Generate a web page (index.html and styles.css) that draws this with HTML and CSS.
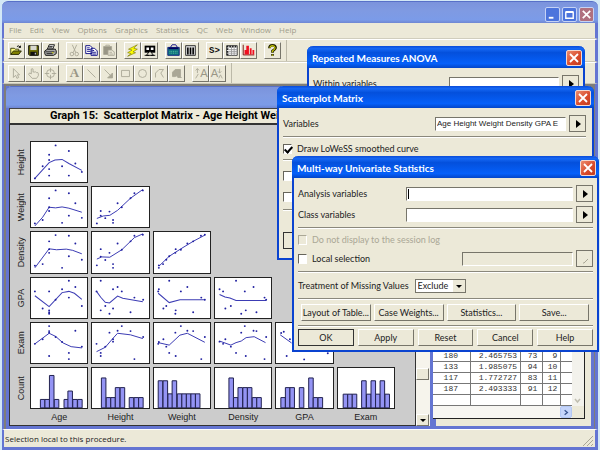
FILE: index.html
```html
<!DOCTYPE html>
<html lang="en">
<head>
<meta charset="utf-8">
<title>Scatterplot Matrix</title>
<link rel="stylesheet" href="styles.css">
</head>
<body>
<div class="app">
  <header class="app-title">
    <button class="cap min" aria-label="Minimize"><svg viewBox="0 0 14 14"><path d="M3 10.5h5" stroke-width="2"/></svg></button>
    <button class="cap" aria-label="Maximize"><svg viewBox="0 0 14 14"><path d="M3 4.500h8v6.500H3zM3 4h8"/></svg></button>
    <button class="cap dim-close" aria-label="Close"><svg viewBox="0 0 14 14"><path d="M3 3l8 8M11 3l-8 8" stroke-width="1.800"/></svg></button>
  </header>
  <nav class="menu">
    <a href="#">File</a><a href="#">Edit</a><a href="#">View</a><a href="#">Options</a><a href="#">Graphics</a><a href="#">Statistics</a><a href="#">QC</a><a href="#">Web</a><a href="#">Window</a><a href="#">Help</a>
  </nav>
  <div class="toolbar">
    <div class="group">
      <button aria-label="Open"><svg viewBox="0 0 17 17"><path d="M2 13V6h4l1 1h4v2" fill="#ffff80" stroke="#333300"/><path d="M2 13l3-4h9l-3 4z" fill="#808000" stroke="#222200"/><path d="M9 4q2-2 4 1M13 3v2h-2" fill="none" stroke="#000"/></svg></button>
      <button aria-label="Save"><svg viewBox="0 0 17 17"><path d="M3 3h11v11H4l-1-1z" fill="#6b6b00" stroke="#000"/><path d="M5 3h7v5H5z" fill="#d8d8d0"/><path d="M5 10h7v4H5z" fill="#111"/><path d="M10 11h1v2h-1z" fill="#fff"/></svg></button>
      <button aria-label="Print"><svg viewBox="0 0 17 17"><path d="M5 7l2-5h6l-2 5z" fill="#fff" stroke="#000"/><path d="M2 9l3-2h9l1 2v3l-3 2H3l-1-2z" fill="#aaa" stroke="#000"/><path d="M3 10h10M4 12h7M7 4h4M6.500 5.500h4" stroke="#222"/><path d="M10 11h2" stroke="#dddd00"/></svg></button>
    </div>
    <div class="group">
      <button class="off" aria-label="Cut"><svg viewBox="0 0 17 17"><path d="M6 2l4 9M11 2L7 11"/><circle cx="5.500" cy="12.500" r="2"/><circle cx="11" cy="12.500" r="2"/></svg></button>
      <button aria-label="Copy"><svg viewBox="0 0 17 17"><path d="M2 3h5l2 2v7H2zM8 6h4l3 3v5H8z" fill="#fff" stroke="#000080"/><path d="M3.500 5.500h3M3.500 7.500h4M3.500 9.500h4M9.500 8.500h2M9.500 10.500h4M9.500 12.500h4" stroke="#000080"/></svg></button>
      <button class="off" aria-label="Paste"><svg viewBox="0 0 17 17"><path d="M3 4h9v9H3z" fill="#999686"/><path d="M5.500 4V2.500h4V4z" fill="#ece9d8"/><path d="M8 8h4l3 2v4H8z" fill="#ece9d8"/><path d="M9.500 10.500h3M9.500 12.500h4"/></svg></button>
    </div>
    <div class="group">
      <button aria-label="Run"><svg viewBox="0 0 17 17"><path d="M14 2L4 7l4 1-5 3 4 1-4 3 9-4-3-1 5-3-4-1z" fill="#ffff00" stroke="#777700" stroke-width=".7"/></svg></button>
      <button aria-label="View data"><svg viewBox="0 0 17 17"><path d="M3 3h12v8H3z" fill="#000"/><path d="M5 5h3v3H5zM10 5h3v3h-3z" fill="#fff"/><path d="M5 14l3-4h2l3 4z" fill="#ece9d8" stroke="#000"/><path d="M3 14h5M10 14h5" stroke="#000"/></svg></button>
    </div>
    <div class="group">
      <button aria-label="Calculator"><svg viewBox="0 0 17 17"><path d="M5 5l2-3h4l2 3" fill="none" stroke="#000080"/><path d="M2 5h13v9H2z" fill="#107080" stroke="#102080"/><path d="M3 6h11" stroke="#000060" stroke-width="2"/><path d="M4 9.500h9M4 11.500h9" stroke="#60d0a0" stroke-dasharray="1 1"/></svg></button>
      <button aria-label="Columns"><svg viewBox="0 0 17 17"><path d="M3 3h11v11H3z" fill="#ddd" stroke="#222"/><path d="M5.500 5v8M8.500 5v8M11.500 5v8" stroke="#000" stroke-width="1.800"/></svg></button>
    </div>
    <div class="group">
      <button class="session" aria-label="Session">S&gt;</button>
      <button aria-label="Datasheet"><svg viewBox="0 0 17 17"><path d="M3 3h12v11H3z" fill="#fff" stroke="#333"/><path d="M3 4h12M4 3v11" stroke="#222" stroke-width="2" stroke-dasharray="2 1"/><path d="M5 7.500h10M5 9.500h10M5 11.500h10M8.500 4v10M11.500 4v10" stroke="#999"/></svg></button>
      <button aria-label="Graph"><svg viewBox="0 0 17 17"><path d="M2.500 2v11.500H15" fill="none" stroke="#700000"/><path d="M4 8h2v5H4zM6 3h3v10H6zM10 6h2v7h-2zM13 8h2v5h-2z" fill="#f01020"/></svg></button>
    </div>
    <div class="group last">
      <button aria-label="Help"><svg viewBox="0 0 17 17"><path d="M5 6q0-3.500 3.500-3.500T12 5.500Q12 7 8.500 9v2M8.500 12.500v2" fill="none" stroke="#222200" stroke-width="3"/><path d="M5.500 5.500q.5-2.500 3-2.500t3 2.500Q11.500 7 8.500 9v1.500M8.500 13v1.500" fill="none" stroke="#c8c800" stroke-width="1.300"/></svg></button>
    </div>
  </div>
  <div class="toolbar tools">
    <div class="group">
      <button class="off" aria-label="Select"><svg viewBox="0 0 17 17"><path d="M5 3v10l2.500-2.500L9 14l2-1-1.500-3H12z"/></svg></button>
      <button class="off" aria-label="Hand"><svg viewBox="0 0 17 17"><path d="M6 9V3.500q1-1 2 0V7q1-1 2 0 1-1 2 .5 2-.5 2 1V11l-2 3H7L3 9.500Q3 8 4.500 8z"/></svg></button>
      <button class="off" aria-label="Target"><svg viewBox="0 0 17 17"><circle cx="8.500" cy="8.500" r="4.500"/><path d="M8.500 2v5M8.500 10v5M2 8.500h5M10 8.500h5"/></svg></button>
    </div>
    <div class="group">
      <button class="off letter" aria-label="Text">A</button>
      <button class="off" aria-label="Line"><svg viewBox="0 0 17 17"><path d="M4 4l9 9"/></svg></button>
      <button class="off" aria-label="Arrow"><svg viewBox="0 0 17 17"><path d="M4 4l7 7"/><path d="M13 8v5.500H7.500z" fill="#aaa796"/></svg></button>
      <button class="off" aria-label="Rectangle"><svg viewBox="0 0 17 17"><path d="M4 5h9v7H4z"/></svg></button>
      <button class="off" aria-label="Ellipse"><svg viewBox="0 0 17 17"><circle cx="8.500" cy="8.500" r="4.500"/></svg></button>
      <button class="off" aria-label="Polygon"><svg viewBox="0 0 17 17"><path d="M4 13V8l4-4h5l-3 4 3 5"/></svg></button>
      <button class="off" aria-label="Filled polygon"><svg viewBox="0 0 17 17"><path d="M4 12V7l3-3h6v8l1 1h-4l-1-2-2 1z" fill="#aaa796"/></svg></button>
    </div>
    <div class="group last">
      <button class="off scale" aria-label="Larger text"><svg viewBox="0 0 17 17"><path d="M5 3v5M3 5l2-2 2 2M3 14l3-5"/></svg>A</button>
      <button class="off scale down" aria-label="Smaller text">A<svg viewBox="0 0 17 17"><path d="M12 3v5M10 6l2 2 2-2M11 14l2-4 2 4"/></svg></button>
    </div>
  </div>
  <main class="workspace">
    <section class="window data">
      <div class="window-title"></div>
      <div class="data-body">
        <table>
          <tr><td>180</td><td>2.465753</td><td>73</td><td>9</td><td></td></tr>
          <tr><td>133</td><td>1.985075</td><td>94</td><td>10</td><td></td></tr>
          <tr><td>117</td><td>1.772727</td><td>83</td><td>11</td><td></td></tr>
          <tr><td>187</td><td>2.493333</td><td>91</td><td>12</td><td></td></tr>
          <tr><td></td><td></td><td></td><td></td><td></td></tr>
        </table>
        <div class="vbar"><svg viewBox="0 0 11 11"><path d="M3 4l2.500 3L8 4"/></svg></div>
        <div class="hbar"><button aria-label="Scroll right"><svg viewBox="0 0 11 11"><path d="M4 3l3 2.500L4 8"/></svg></button></div>
        <div class="corner"></div>
      </div>
    </section>
    <section class="window graph">
      <div class="window-title"></div>
      <h1>Graph 15:&nbsp; Scatterplot Matrix - Age Height Wei</h1>
      <div class="graph-body">
        <div class="canvas"><div class="matrix" id="matrix"></div></div>
        <div class="scroll"><span class="thumb"></span><button aria-label="Scroll down"><svg viewBox="0 0 12 12"><path d="M3 5h6L6 8z"/></svg></button></div>
      </div>
    </section>
  </main>
  <footer class="status"><span>Selection local to this procedure.</span>
    <svg viewBox="0 0 12 12"><path d="M1 11L11 1M5 11l6-6M9 11l2-2"/></svg></footer>
</div>

<section class="dialog anova">
  <header><h2>Repeated Measures ANOVA</h2><button class="close" aria-label="Close"><svg viewBox="0 0 14 14"><path d="M3 3l8 8M11 3l-8 8"/></svg></button></header>
  <div class="content">
    <div class="row"><label for="within">Within variables</label><input id="within" type="text"><button class="pick" aria-label="Pick"><svg viewBox="0 0 14 14"><path d="M5 3v8l5-4z"/></svg></button></div>
  </div>
</section>

<section class="dialog splom">
  <header><h2>Scatterplot Matrix</h2><button class="close" aria-label="Close"><svg viewBox="0 0 14 14"><path d="M3 3l8 8M11 3l-8 8"/></svg></button></header>
  <div class="content">
    <div class="row"><label for="vars">Variables</label><input id="vars" type="text" value="Age Height Weight Density GPA E"><button class="pick" aria-label="Pick"><svg viewBox="0 0 14 14"><path d="M5 3v8l5-4z"/></svg></button></div>
    <hr>
    <label class="check"><input type="checkbox" checked>Draw LoWeSS smoothed curve</label>
    <hr>
    <div class="check"><input type="checkbox" aria-label="Option"></div>
    <div class="check"><input type="checkbox" aria-label="Option"></div>
    <hr class="apart">
    <button class="push ok" aria-label="OK"></button>
  </div>
</section>

<section class="dialog stats">
  <header><h2>Multi-way Univariate Statistics</h2><button class="close" aria-label="Close"><svg viewBox="0 0 14 14"><path d="M3 3l8 8M11 3l-8 8"/></svg></button></header>
  <div class="content">
    <div class="row"><label for="analysis">Analysis variables</label><span class="field caret"><input id="analysis" type="text"></span><button class="pick" aria-label="Pick"><svg viewBox="0 0 14 14"><path d="M5 3v8l5-4z"/></svg></button></div>
    <div class="row"><label for="class">Class variables</label><span class="field"><input id="class" type="text"></span><button class="pick" aria-label="Pick"><svg viewBox="0 0 14 14"><path d="M5 3v8l5-4z"/></svg></button></div>
    <hr>
    <label class="check disabled"><input type="checkbox" disabled>Do not display to the session log</label>
    <div class="row local"><label class="check"><input type="checkbox">Local selection</label><input type="text" aria-label="Selection" disabled><button class="pick faint" aria-label="Pick"><svg viewBox="0 0 14 14"><path d="M5 11h1l4-4"/></svg></button></div>
    <hr>
    <div class="row missing"><label for="missing">Treatment of Missing Values</label>
      <span class="select"><select id="missing"><option>Exclude</option></select><svg viewBox="0 0 12 12"><path d="M3 5h6L6 8z"/></svg></span></div>
    <hr>
    <div class="buttons options"><button class="push">Layout of Table...</button><button class="push">Case Weights...</button><button class="push">Statistics...</button><button class="push">Save...</button></div>
    <div class="actions">
      <hr>
      <div class="buttons"><button class="push ok">OK</button><button class="push">Apply</button><button class="push">Reset</button><button class="push">Cancel</button><button class="push">Help</button></div>
    </div>
  </div>
</section>
<script src="plots.js"></script>
</body>
</html>
```
FILE: styles.css
```css
* { box-sizing: border-box; }
body {
  margin: 0;
  background: #d3e8f6;
  font-family: Lato, "Liberation Sans", sans-serif;
  font-size: 9px;
  line-height: 12px;
  color: #222;
}
button, input, select { font: inherit; color: inherit; padding: 0; margin: 0; border-radius: 0; }
button { display: flex; align-items: center; justify-content: center; }
h1, h2 { margin: 0; }
svg { display: block; }

.app {
  min-height: 100vh;
  padding: 1px 2px 0;
  display: flex;
  flex-direction: column;
}
.app-title {
  height: 22px;
  flex: none;
  display: flex;
  justify-content: flex-end;
  align-items: center;
  gap: 2px;
  padding: 3px 4px 0 0;
  border-radius: 6px 6px 0 0;
  border-top: 1px solid #5870c8;
  background: linear-gradient(#7b93dc, #7f9ae2 40%, #7b9be8 85%, #6f86d2);
}
.cap { width: 15px; height: 15px; border: 1px solid #c5d2f5; border-radius: 2px; background: #4c74dc; }
.cap svg { width: 13px; height: 13px; fill: none; stroke: #fff; stroke-width: 1.5; }
.dim-close { background: #b0707f; }

.menu, .toolbar, .workspace, .status {
  border-left: 2px solid #6475d2;
  border-right: 3px solid #6475d2;
  background: #ece9d8;
}
.menu {
  height: 16px;
  flex: none;
  display: flex;
  gap: 8px;
  padding: 1px 5px;
  border-bottom: 1px solid #d0cdbd;
}
.menu, .status { font-family: "Open Sans", sans-serif; font-size: 8px; }
.menu a {
  color: #a09d8c;
  text-decoration: none;
}
.toolbar {
  height: 23px;
  flex: none;
  display: flex;
  align-items: center;
  gap: 7px;
  padding: 0 4px;
  border-top: 1px solid #fff;
  border-bottom: 1px solid #cbc8b8;
}
.tools { height: 22px; }
.group { display: flex; }
.group.last { padding-right: 5px; border-right: 1px solid #bcb9a8; height: 100%; align-items: center; }
.toolbar button {
  width: 17px;
  height: 17px;
  overflow: hidden;
  background: #ece9d8;
  border: 1px solid;
  border-color: #fff #77756a #77756a #fff;
}
.toolbar svg { width: 15px; height: 15px; flex: none; }
.off svg { fill: none; stroke: #aaa796; }
.session { font: bold 9px "Liberation Mono", monospace; color: #111; }
.toolbar .letter { font: bold 13px "Liberation Serif", serif; color: #999686; }
.toolbar .scale { font-size: 11px; color: #999686; }
.toolbar .scale svg { width: 15px; margin-right: -8px; }
.toolbar .down svg { margin: 0 0 0 -9px; }

.workspace { position: relative; flex: 1; background: #807e78; }
.window { position: absolute; bottom: 0; border: 3px solid #6475d2; border-top: 0; background: #ece9d8; display: flex; flex-direction: column; }
.window-title {
  height: 22px;
  flex: none;
  margin: 0 -3px;
  border-top: 1px solid #5870c8;
  border-radius: 5px 5px 0 0;
  background: linear-gradient(#7b93dc, #7f9ae2 40%, #7b9be8 85%, #6f86d2);
}
.graph { left: 2px; top: 2px; width: 427px; }
.graph h1 {
  height: 17px;
  flex: none;
  padding-left: 40px;
  overflow: hidden;
  white-space: nowrap;
  border: 1px solid #444;
  border-bottom: 2px solid #333;
  font-family: Roboto, sans-serif;
  font-size: 11px;
  line-height: 14px;
  color: #000;
}
.graph-body { flex: 1; min-height: 0; display: flex; }
.canvas { flex: 1; padding: 16px 20px 3px 5px; background: #ccc; border: 1px solid #333; border-top: 0; }
.matrix {
  height: 100%;
  display: grid;
  grid-template-columns: 12px repeat(6, 1fr);
  grid-template-rows: repeat(6, minmax(0, 1fr)) 10px;
  column-gap: 3px;
  row-gap: 3px;
  font-family: "Liberation Sans", sans-serif;
}
.cell svg { width: 100%; height: 100%; background: #fff; border: 1px solid #222; }
.side { writing-mode: vertical-rl; transform: rotate(180deg); text-align: center; }
.foot { text-align: center; line-height: 10px; }
.curve { fill: none; stroke: #3c3cb4; stroke-width: 1; vector-effect: non-scaling-stroke; }
.dot { fill: #2020a0; }
.bar { fill: #9494f4; stroke: #222250; stroke-width: 1; vector-effect: non-scaling-stroke; }
.scroll {
  width: 14px;
  display: flex;
  flex-direction: column;
  justify-content: flex-end;
  gap: 34px;
  background: #f6f4ec;
}
.thumb, .scroll button { width: 13px; height: 12px; background: #ece9d8; border: 1px solid; border-color: #fff #77756a #77756a #fff; }
.scroll svg { width: 12px; height: 12px; flex: none; }

.data { left: 429px; right: 1px; top: 140px; }
.data-body {
  flex: 1;
  min-height: 0;
  display: grid;
  grid-template-columns: 1fr 12px;
  grid-template-rows: 1fr 12px;
  align-items: end;
  margin: 0 6px 7px -3px;
  border-right: 1px solid #222;
  border-bottom: 1px solid #222;
  background: #fff;
}
.data table { width: 100%; table-layout: fixed; border-collapse: collapse; font: 8px "Liberation Mono", monospace; color: #333; }
.data td { height: 11px; padding: 0 3px 0 0; line-height: 10px; border: 1px solid #777; border-left: 0; text-align: right; }
.data td:nth-child(1) { width: 27%; padding-right: 12px; }
.data td:nth-child(2) { width: 36%; }
.data td:nth-child(3) { width: 16%; padding-right: 5px; }
.data td:nth-child(4) { width: 13%; }
.data td:last-child { border-right: 0; }
.vbar { height: 100%; display: flex; align-items: flex-end; background: #f3f2ec; }
.vbar svg, .hbar svg { width: 11px; height: 11px; fill: none; stroke: #c0beb0; stroke-width: 1.5; }
.hbar { height: 12px; display: flex; justify-content: flex-end; background: #f7f6f2; }
.hbar button { width: 12px; height: 12px; border: 1px solid #b4c8f4; border-radius: 2px; background: #c5d5fb; }
.hbar svg { stroke: #3a5590; }
.corner { height: 100%; background: #ece9d8; }

.status {
  height: 21px;
  flex: none;
  display: flex;
  justify-content: space-between;
  align-items: center;
  padding: 0 1px;
  border-top: 1px solid #fff;
  border-bottom: 3px solid #6475d2;
}
.status svg { width: 12px; height: 12px; stroke: #aaa796; align-self: flex-end; }

.dialog {
  position: absolute;
  display: flex;
  flex-direction: column;
  border: 2px solid #0a43d0;
  border-top: 0;
  border-radius: 6px 6px 0 0;
  background: #ece9d8;
}
.dialog header {
  height: 22px;
  flex: none;
  margin: 0 -2px;
  padding: 1px 3px 0 5px;
  display: flex;
  align-items: center;
  justify-content: space-between;
  border-radius: 6px 6px 0 0;
  background: linear-gradient(#0a4bd8, #1668f4 12%, #0450dc 30%, #0560fa 80%, #0345c8);
}
.dialog h2 { font-size: 10px; font-weight: 700; line-height: 14px; color: #fff; white-space: nowrap; }
.close { width: 16px; height: 16px; border: 1px solid #f4d8d0; border-radius: 2px; background: linear-gradient(135deg, #ec8a6c, #d8492a 60%, #c03c20); }
.close svg { width: 14px; height: 14px; flex: none; fill: none; stroke: #fff; stroke-width: 1.8; }
.content { padding: 7px 4px 4px; display: flex; flex-direction: column; }
.row { display: flex; align-items: center; gap: 3px; height: 17px; }
.row > label { flex: 1; white-space: nowrap; }
input[type="text"] {
  width: 131px;
  height: 14px;
  background: #fff;
  border: 1px solid;
  border-color: #77756a #fff #fff #77756a;
  outline: 0;
  padding-left: 1px;
  font-family: "Liberation Sans", sans-serif;
  font-size: 8px;
}
input[type="text"]:disabled { background: #ece9d8; }
.pick { width: 17px; height: 17px; background: #ece9d8; border: 1px solid; border-color: #fff #44423a #44423a #fff; outline: 1px solid #77756a; outline-offset: -1px; }
.pick svg { width: 14px; height: 14px; flex: none; fill: #000; }
.faint svg { fill: none; stroke: #aaa796; }
hr { width: 100%; margin: 0; border: 0; height: 2px; border-top: 1px solid #8a887c; border-bottom: 1px solid #fff; }
.check { display: flex; align-items: center; gap: 5px; height: 17px; white-space: nowrap; }
.check input { appearance: none; width: 9px; height: 10px; flex: none; background: #fff; border: 1px solid; border-color: #66645a #fff #fff #66645a; }
.check input:checked::before { content: ""; display: block; width: 3px; height: 6px; margin: 0 0 0 2px; border: solid #000; border-width: 0 2px 2px 0; transform: rotate(42deg); }
.check input:disabled { background: #ece9d8; border-color: #aaa796 #fff #fff #aaa796; }
.disabled { color: #aaa796; }
.push { height: 17px; background: #ece9d8; border: 1px solid; border-color: #fff #77756a #77756a #fff; white-space: nowrap; }
.ok { border: 1px solid #333; }

.anova { left: 307px; top: 46px; width: 278px; height: 60px; }
.anova input[type="text"] { width: 110px; }
.splom { left: 277px; top: 86px; width: 317px; height: 174px; }
.splom .content { padding-right: 6px; }
.splom hr { margin: 4px 0; }
.splom .check { height: 13px; }
.splom div.check { height: 21px; }
.splom .apart { margin-bottom: 21px; margin-top: 2px; }
.splom .ok { width: 56px; }
.stats { left: 292px; top: 156px; width: 307px; }
.stats .content { gap: 4px; }
.field { position: relative; flex: none; }
.field input[type="text"] { width: 167px; display: block; }
.caret::after { content: ""; position: absolute; left: 2px; top: 2px; width: 1px; height: 10px; background: #000; }
.stats .check { height: 13px; }
.stats .local input[type="text"] { width: 111px; }
.row.missing > label { flex: none; margin-right: 3px; }
.select { position: relative; }
.select select { appearance: none; display: block; width: 51px; height: 14px; padding-left: 2px; background: #fff; border: 1px solid #77756a; }
.select svg { position: absolute; right: 1px; top: 1px; width: 12px; height: 12px; background: #ece9d8; pointer-events: none; }
.buttons { display: grid; grid-auto-flow: column; grid-auto-columns: minmax(0, 1fr); gap: 4px; }
.options { padding: 0 4px 0 3px; gap: 3px; }
.actions { display: flex; flex-direction: column; gap: 2px; }
```
FILE: plots.js
```javascript
// Every cell uses a 174 x 129 drawing area; "x"/"y" give the offset of its coordinates.
const rows = [
  { name: "Height", cells: [
    { x: 91, y: 184, pts: "103,301 127,262 147,225 147,242 147,271 147,292 167,195 187,262 208,213 208,292 228,253 248,280", line: "103,301 147,250 165,242 187,240 208,253 248,275" } ] },
  { name: "Weight", cells: [
    { x: 91, y: 321, pts: "103,438 127,427 147,357 147,386 147,398 167,332 187,436 208,341 208,413 228,373 248,420", line: "103,446 127,418 147,386 167,388 187,385 208,389 248,402" },
    { x: 275, y: 321, pts: "290,438 302,398 302,413 316,421 329,400 340,427 340,436 354,373 367,386 394,357 406,341 432,332", line: "290,422 310,414 330,412 354,396 394,357 432,329" } ] },
  { name: "Density", cells: [
    { x: 91, y: -8, pts: "103,100 127,95 147,22 147,47 147,59 167,2 187,107 208,4 208,70 228,29 248,81", line: "103,107 147,46 170,49 200,47 220,51 248,62" },
    { x: 275, y: -8, pts: "290,99 302,47 302,71 316,82 329,59 340,95 340,107 354,29 367,49 394,22 406,4 432,1", line: "290,79 305,72 330,73 367,49 406,10 432,-2" },
    { x: 460, y: -8, pts: "475,99 475,107 488,95 498,81 507,70 526,59 527,47 543,49 563,29 581,22 605,4 617,1", line: "475,102 507,70 543,46 581,22 617,2" } ] },
  { name: "GPA", cells: [
    { x: 91, y: 128, pts: "103,171 147,171 127,226 147,232 147,238 147,243 167,198 187,164 208,137 208,191 228,157 248,218", line: "103,185 147,220 187,175 208,171 225,177 248,197" },
    { x: 275, y: 128, pts: "289,171 302,137 302,232 316,218 329,243 340,226 340,164 354,157 367,171 394,238 406,191 433,198", line: "289,171 302,190 316,206 329,208 354,186 370,193 432,204" },
    { x: 460, y: 128, pts: "475,164 473,171 507,137 498,218 489,226 527,232 526,243 543,171 563,157 581,238 606,191 617,198", line: "473,177 507,207 540,198 617,198" },
    { x: 644, y: 128, pts: "658,164 669,171 709,137 693,218 676,226 739,232 725,243 736,171 763,157 772,238 797,191 802,198", line: "658,181 675,189 690,192 709,200 802,200" } ] },
  { name: "Exam", cells: [
    { x: 91, y: 264, pts: "103,331 127,316 147,274 147,290 147,295 147,370 167,309 187,325 208,360 208,380 228,289 248,340", line: "103,331 147,297 167,307 190,328 215,340 248,344" },
    { x: 275, y: 264, pts: "289,331 302,360 302,370 316,340 329,295 340,316 340,324 354,289 367,274 394,290 406,380 433,309", line: "289,356 316,342 340,313 354,297 394,302 432,314" },
    { x: 460, y: 264, pts: "475,325 473,331 489,316 498,340 507,360 526,295 527,370 543,274 563,289 581,290 606,380 617,309", line: "473,327 507,335 540,303 563,297 617,326" },
    { x: 644, y: 264, pts: "658,324 669,331 676,316 693,340 709,360 725,295 736,274 739,370 763,289 772,290 797,380 802,309", line: "658,322 693,335 709,327 725,322 740,311 765,308 800,327" },
    { x: 17, y: -22, pts: "33,10 41,6 60,30 50,84 104,95 177,75", line: "30,16 65,42" } ] },
  { name: "Count", cells: [
    { x: 91, y: 401, bars: "120,502 134,502 148,425 163,502 193,502 205,475 220,502 235,502" },
    { x: 275, y: 401, bars: "304,433 319,496 333,496 347,464 362,464 390,496 405,496 419,496" },
    { x: 460, y: 401, bars: "473,442 488,442 503,484 516,442 532,484 546,484 560,484 574,484 588,484" },
    { x: 644, y: 401, bars: "687,433 701,496 715,464 730,464 744,464 759,496 773,496" },
    { x: 17, y: 115, bars: "32,210 46,178 60,178 89,178 118,147 132,210 147,210" },
    { x: 201, y: 115, bars: "217,199 231,199 245,199 274,156 289,199 303,156 317,199 331,156 346,199" } ] }
];

const pairs = (text) => text.split(" ").map((p) => p.split(",").map(Number));

function drawCell(cell) {
  let shapes = "";
  if (cell.line) shapes += `<polyline class="curve" points="${cell.line}"/>`;
  if (cell.pts) for (const [x, y] of pairs(cell.pts)) shapes += `<circle class="dot" cx="${x}" cy="${y}" r="3"/>`;
  if (cell.bars) for (const [x, y] of pairs(cell.bars)) shapes += `<rect class="bar" x="${x}" y="${y}" width="14" height="${cell.y + 128 - y}"/>`;
  return `<div class="cell"><svg viewBox="${cell.x} ${cell.y} 174 129" preserveAspectRatio="none">${shapes}</svg></div>`;
}

let html = "";
for (const row of rows) {
  html += `<div class="side">${row.name}</div>`;
  for (let i = 0; i < 6; i++) html += row.cells[i] ? drawCell(row.cells[i]) : "<div></div>";
}
html += "<div></div>";
for (const name of ["Age", "Height", "Weight", "Density", "GPA", "Exam"]) html += `<div class="foot">${name}</div>`;
document.getElementById("matrix").innerHTML = html;
```
